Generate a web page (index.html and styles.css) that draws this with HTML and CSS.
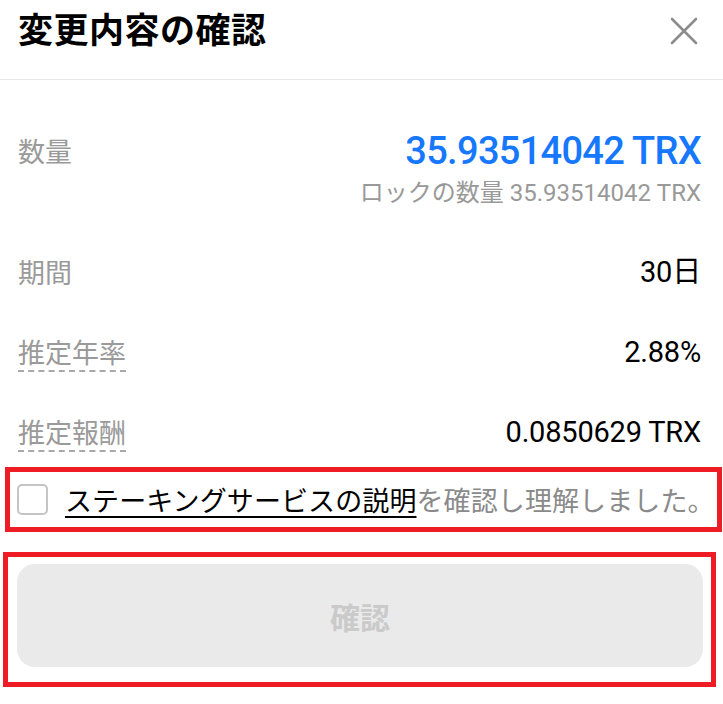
FILE: index.html
```html
<!DOCTYPE html>
<html lang="ja">
<head>
    <meta charset="UTF-8">
    <meta name="viewport" content="width=device-width, initial-scale=1.0">
    <title>変更内容の確認</title>
    <link rel="stylesheet" href="styles.css">
</head>
<body>
    <div class="sheet">
        <div class="sheet-header">
            <h1>変更内容の確認</h1>
            <button class="close-btn" aria-label="閉じる">
                <svg width="28" height="28" viewBox="0 0 28 28">
                    <path d="M2 2 L26 26 M26 2 L2 26" stroke="#8c8c8c" stroke-width="2.6" stroke-linecap="round" fill="none"/>
                </svg>
            </button>
        </div>

        <div class="details">
            <div class="detail-row amount-row">
                <span class="label">数量</span>
                <div class="amount">
                    <span class="value blue">35.93514042 TRX</span>
                    <span class="sub">ロックの数量 35.93514042 TRX</span>
                </div>
            </div>

            <div class="detail-row">
                <span class="label">期間</span>
                <span class="value">30日</span>
            </div>

            <div class="detail-row">
                <span class="label dashed">推定年率</span>
                <span class="value">2.88%</span>
            </div>

            <div class="detail-row">
                <span class="label dashed">推定報酬</span>
                <span class="value">0.0850629 TRX</span>
            </div>
        </div>

        <label class="agree-box">
            <span class="checkbox"></span>
            <span class="agree-text"><a href="#" class="agree-link">ステーキングサービスの説明</a>を確認し理解しました。</span>
        </label>

        <div class="confirm-box">
            <button class="confirm-btn" disabled>確認</button>
        </div>
    </div>
</body>
</html>
```

FILE: styles.css
```css
body {
    margin: 0;
    background-color: #fff;
    font-family: Roboto, "Noto Sans CJK JP", sans-serif;
    color: #111;
}

.sheet {
    width: 723px;
    height: 704px;
    overflow: hidden;
}

.sheet-header {
    height: 80px;
    display: flex;
    align-items: center;
    justify-content: space-between;
    padding: 0 25px 0 18px;
    border-bottom: 1px solid #e8e8e8;
    box-sizing: border-box;
}

.sheet-header h1 {
    margin: 0 0 24px;
    font-size: 35px;
    font-weight: bold;
    font-family: "Noto Sans CJK JP", sans-serif;
    letter-spacing: 0.5px;
    color: #000;
}

.close-btn {
    border: none;
    background: none;
    padding: 0;
    margin-bottom: 18px;
    width: 28px;
    height: 28px;
    cursor: pointer;
}

.details {
    padding: 51px 22px 0 18px;
    display: flex;
    flex-direction: column;
    gap: 40px;
}

.detail-row {
    display: flex;
    justify-content: space-between;
    align-items: center;
    height: 40px;
}

.amount-row {
    height: auto;
    align-items: flex-start;
}

.amount-row .label {
    line-height: 40px;
}

.amount {
    display: flex;
    flex-direction: column;
    align-items: flex-end;
    gap: 7px;
}

.label {
    font-family: "Noto Sans CJK JP", sans-serif;
    font-size: 27px;
    color: #9a9a9a;
    line-height: 40px;
}

.label.dashed {
    text-decoration: underline dashed #a8a8a8 2px;
    text-underline-offset: 7px;
}

.value {
    font-size: 29px;
    line-height: 40px;
    letter-spacing: -0.2px;
    color: #000;
}

.value.blue {
    font-size: 38px;
    font-weight: 500;
    letter-spacing: -0.7px;
    color: #1677ff;
}

.sub {
    font-size: 24px;
    line-height: 30px;
    margin-bottom: 4px;
    color: #999;
}

.agree-box {
    display: flex;
    align-items: center;
    gap: 17px;
    margin: 15px 1px 0 5px;
    height: 65px;
    padding-left: 7px;
    border: 5px solid #ee1c25;
    box-sizing: border-box;
    white-space: nowrap;
}

.checkbox {
    flex: none;
    width: 31px;
    height: 31px;
    border: 2px solid #c4c4c4;
    border-radius: 5px;
    box-sizing: border-box;
}

.agree-text {
    font-family: "Noto Sans CJK JP", sans-serif;
    font-size: 27px;
    color: #8a8a8a;
    letter-spacing: 0.1px;
}

.agree-link {
    color: #000;
    text-decoration: underline 2px;
    text-underline-offset: 5px;
}

.confirm-box {
    margin: 20px 7px 0 3px;
    height: 135px;
    padding: 7px 8px 15px 9px;
    border: 5px solid #ee1c25;
    box-sizing: border-box;
}

.confirm-btn {
    width: 100%;
    height: 100%;
    border: none;
    border-radius: 18px;
    background-color: #eaeaea;
    color: #cacaca;
    font-family: "Noto Sans CJK JP", sans-serif;
    font-size: 30px;
    font-weight: bold;
}
```
